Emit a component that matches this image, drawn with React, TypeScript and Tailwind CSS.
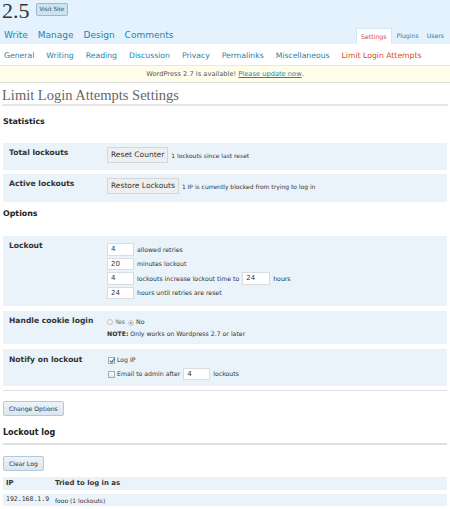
import React from 'react';

const sans = "font-['DejaVu_Sans',sans-serif]";

const Check = ({ checked }: { checked?: boolean }) => (
  <span className="relative inline-block w-[7px] h-[7px] border border-[#a9a9a9] bg-gradient-to-b from-[#ffffff] to-[#e6e6e6] shrink-0">
    {checked && (
      <svg viewBox="0 0 8 8" className="absolute left-[0px] top-[-1px] w-[7px] h-[7px]">
        <path d="M1.2 4.2 L3.2 6.2 L6.8 1" fill="none" stroke="#4d6d8e" strokeWidth="1.3" />
      </svg>
    )}
  </span>
);

const Radio = ({ checked }: { checked?: boolean }) => (
  <span className="relative inline-flex items-center justify-center w-[6px] h-[6px] rounded-full border border-[#c4c4c4] bg-[#f4f4f4] shrink-0">
    {checked && <span className="w-[2px] h-[2px] rounded-full bg-[#8c8c8c]" />}
  </span>
);

const Field = ({ value, w = 'w-[27px]' }: { value: string; w?: string }) => (
  <span className={`${w} h-[12.5px] bg-white border border-[#dcdcdc] pl-[3px] text-[7px] leading-[11px] text-[#333] shrink-0`}>
    {value}
  </span>
);

const GrayButton = ({ children }: { children: React.ReactNode }) => (
  <span className="h-[16px] px-[3px] bg-[#efefef] border border-[#d6d6d6] text-[7.5px] leading-[14px] text-[#333]">
    {children}
  </span>
);

const BlueButton = ({ children }: { children: React.ReactNode }) => (
  <div className="self-start h-[15px] px-[5px] bg-gradient-to-b from-[#eef3f7] to-[#dbe6ef] border border-[#b2c9dc] rounded-[2px] text-[6.1px] leading-[13px] text-[#333]">
    {children}
  </div>
);

export default function App() {
  const mainNav = ['Write', 'Manage', 'Design', 'Comments'];
  const subNav = ['General', 'Writing', 'Reading', 'Discussion', 'Privacy', 'Permalinks', 'Miscellaneous'];

  return (
    <div className={`${sans} w-[450px] h-[509px] bg-white text-[#333] overflow-hidden flex flex-col`}>
      {/* header */}
      <div className="h-[44px] bg-[#e4f2fd] flex flex-col">
        <div className="h-[28px] flex items-start pl-[2px]">
          <span className="font-['Liberation_Serif',serif] text-[22px] leading-[22px] text-[#333]">2.5</span>
          <span className="ml-[6px] mt-[3px] h-[13px] px-[3px] bg-[#cfe2f0] border border-[#94bad4] rounded-[2px] text-[5.7px] leading-[11px] text-[#264c6e]">
            Visit Site
          </span>
        </div>
        <div className="h-[16px] flex items-end justify-between">
          <div className="flex gap-[10px] pl-[4px] h-[16px] items-center text-[9px] text-[#2583ad]">
            {mainNav.map(n => <span key={n}>{n}</span>)}
          </div>
          <div className="flex items-end h-[16px] pr-[6px] text-[6.2px]">
            <span className="h-[16px] px-[4px] bg-white border-t border-x border-[#d3e6f4] leading-[16px] text-[#d54e21]">Settings</span>
            <span className="ml-[5px] leading-[16px] text-[#2583ad]">Plugins</span>
            <span className="ml-[8px] leading-[16px] text-[#2583ad]">Users</span>
          </div>
        </div>
      </div>

      {/* sub menu */}
      <div className="h-[22px] pt-[2px] flex items-center gap-[12px] pl-[4px] text-[7.7px] text-[#2583ad] border-b border-[#e8e8e8]">
        {subNav.map(n => <span key={n}>{n}</span>)}
        <span className="text-[#d54e21]">Limit Login Attempts</span>
      </div>

      {/* update nag */}
      <div className="h-[17px] bg-[#fffeeb] border-b border-[#dadada] flex items-center justify-center text-[6.7px] text-[#555]">
        WordPress 2.7 is available!&nbsp;<span className="text-[#2583ad] underline">Please update now</span>.
      </div>

      {/* content */}
      <div className="flex flex-col px-[3px]">
        <div className="h-[23px] pt-[3px] -mx-[1px] font-['Liberation_Serif',serif] text-[14.5px] leading-[18px] text-[#666] border-b-2 border-[#e6e6e6]">
          Limit Login Attempts Settings
        </div>

        <div className="mt-[11px] text-[7.9px] font-bold leading-[10px] text-[#222]">Statistics</div>

        <div className="mt-[16px] h-[27px] pt-[4px] flex bg-[#eaf3fa]">
          <div className="w-[104px] pl-[6px] pt-[1px] text-[7.6px] font-bold leading-[10px] text-[#333]">Total lockouts</div>
          <div className="flex items-center h-[16px]">
            <GrayButton>Reset Counter</GrayButton>
            <span className="ml-[3px] text-[6px]">1 lockouts since last reset</span>
          </div>
        </div>

        <div className="mt-[4px] h-[28px] pt-[4px] flex bg-[#eaf3fa]">
          <div className="w-[104px] pl-[6px] pt-[1px] text-[7.6px] font-bold leading-[10px] text-[#333]">Active lockouts</div>
          <div className="flex items-center h-[16px]">
            <GrayButton>Restore Lockouts</GrayButton>
            <span className="ml-[3px] text-[6px]">1 IP is currently blocked from trying to log in</span>
          </div>
        </div>

        <div className="mt-[7px] text-[7.9px] font-bold leading-[10px] text-[#222]">Options</div>

        <div className="mt-[17px] h-[70px] pt-[5px] flex bg-[#eaf3fa]">
          <div className="w-[104px] pl-[6px] text-[7.6px] font-bold leading-[10px] text-[#333]">Lockout</div>
          <div className="pt-[2px] flex flex-col gap-[2px] text-[6.2px]">
            <div className="flex items-center gap-[3px]"><Field value="4" /><span>allowed retries</span></div>
            <div className="flex items-center gap-[3px]"><Field value="20" /><span>minutes lockout</span></div>
            <div className="flex items-center gap-[3px]">
              <Field value="4" /><span>lockouts increase lockout time to</span>
              <Field value="24" w="w-[28px]" /><span>hours</span>
            </div>
            <div className="flex items-center gap-[3px]"><Field value="24" /><span>hours until retries are reset</span></div>
          </div>
        </div>

        <div className="mt-[5px] h-[33px] pt-[5px] flex bg-[#eaf3fa]">
          <div className="w-[104px] pl-[6px] text-[7.6px] font-bold leading-[10px] text-[#333]">Handle cookie login</div>
          <div className="pt-[1px] flex flex-col gap-[2px] text-[6.2px]">
            <div className="h-[10px] flex items-center">
              <Radio /><span className="ml-[2px] text-[#666]">Yes</span>
              <span className="ml-[3px]"><Radio checked /></span><span className="ml-[2px]">No</span>
            </div>
            <div className="h-[10px] flex items-center">
              <span className="font-bold">NOTE:</span>&nbsp;Only works on Wordpress 2.7 or later
            </div>
          </div>
        </div>

        <div className="mt-[5px] h-[37px] pt-[6px] flex bg-[#eaf3fa]">
          <div className="w-[104px] pl-[6px] text-[7.6px] font-bold leading-[10px] text-[#333]">Notify on lockout</div>
          <div className="flex flex-col gap-[3px] text-[6.2px]">
            <div className="h-[10px] flex items-center pl-[1px]">
              <Check checked /><span className="ml-[2px]">Log IP</span>
            </div>
            <div className="h-[12px] flex items-center pl-[1px]">
              <Check /><span className="ml-[2px]">Email to admin after</span>
              <span className="ml-[3px] flex"><Field value="4" /></span>
              <span className="ml-[3px]">lockouts</span>
            </div>
          </div>
        </div>

        <div className="mt-[4px] h-[1px] bg-[#e2dfe4]" />

        <div className="mt-[10px] flex"><BlueButton>Change Options</BlueButton></div>

        <div className="mt-[11px] text-[8px] font-bold leading-[12px] text-[#222]">Lockout log</div>
        <div className="mt-[4px] h-[2px] bg-[#e0e0e0]" />

        <div className="mt-[11px] flex"><BlueButton>Clear Log</BlueButton></div>

        <div className="mt-[6px] h-[13px] flex items-center bg-[#eaf3fa] text-[6.9px] font-bold text-[#333]">
          <span className="w-[52px] pl-[3px]">IP</span>
          <span>Tried to log in as</span>
        </div>
        <div className="mt-[4px] h-[12px] flex items-center bg-[#eaf3fa] text-[6px]">
          <span className="w-[52px] pl-[3px] font-['DejaVu_Sans_Mono',monospace] text-[6.5px]">192.168.1.9</span>
          <span>fooo (1 lockouts)</span>
        </div>
      </div>
    </div>
  );
}
